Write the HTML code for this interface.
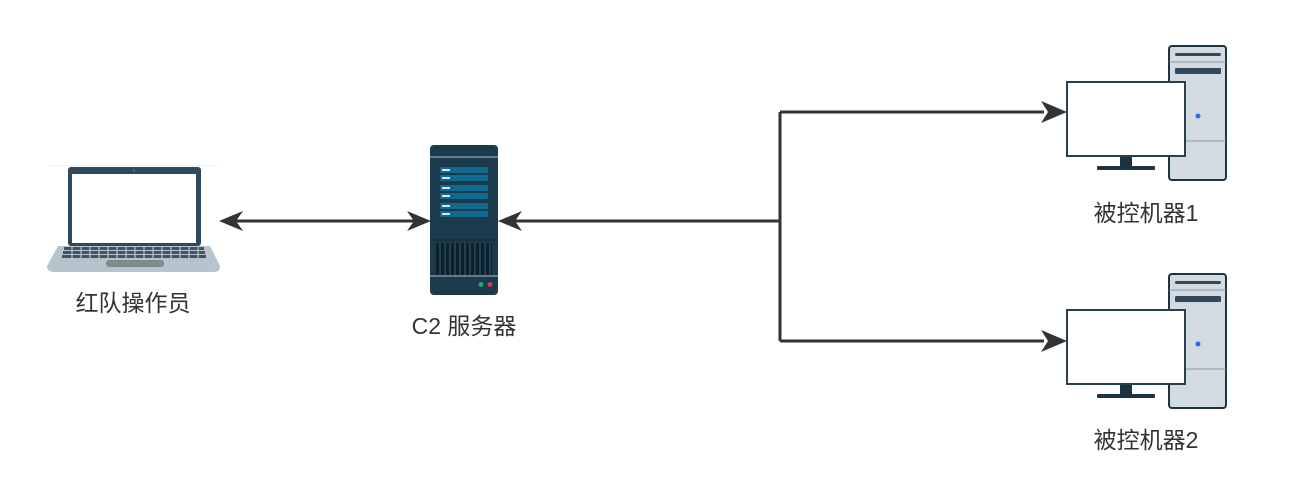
<!DOCTYPE html>
<html><head><meta charset="utf-8"><style>
html,body{margin:0;padding:0;background:#fff;width:1293px;height:486px;overflow:hidden}
svg{display:block}
text{font-family:"Liberation Sans","Noto Sans CJK SC",sans-serif;font-size:23px;fill:#333}
</style></head><body>
<svg width="1293" height="486" viewBox="0 0 1293 486">
<defs>
<marker id="a" markerWidth="10" markerHeight="10" refX="9" refY="5" orient="auto" markerUnits="userSpaceOnUse" viewBox="0 0 10 10"></marker>
</defs>
<g stroke="#333" stroke-width="3" fill="none">
<line x1="236" y1="221" x2="414" y2="221"/>
<polyline points="514,221 780,221"/>
<polyline points="780,112 780,341"/>
<line x1="780" y1="112" x2="1044" y2="112"/>
<line x1="780" y1="341" x2="1044" y2="341"/>
</g>
<g fill="#333">
<polygon points="219,221 243,211 236,221 243,231"/>
<polygon points="431,221 407,211 414,221 407,231"/>
<polygon points="498,221 522,211 515,221 522,231"/>
<polygon points="1067,112 1041,101 1048,112 1041,123"/>
<polygon points="1067,341 1041,330 1048,341 1041,352"/>
</g>
<!-- laptop -->
<line x1="50" y1="166" x2="217" y2="166" stroke="#eee" stroke-width="1"/>
<rect x="68" y="167" width="133" height="79" rx="3" fill="#2f4a5e"/>
<rect x="72" y="174" width="124" height="69" fill="#fff"/>
<circle cx="134" cy="170.5" r="1.2" fill="#667"/>
<path d="M58 246 H210 L220 266 Q220 272 214 272 H54 Q47 272 47 266 Z" fill="#b8c4cb"/>
<g fill="#3d5566">
<rect x="64" y="247" width="140" height="3"/>
<rect x="63" y="251" width="142" height="3"/>
<rect x="62" y="255" width="144" height="3"/>
</g>
<g stroke="#b8c4cb" stroke-width="1.2">
<path d="M72 247v11M81 247v11M90 247v11M99 247v11M108 247v11M117 247v11M126 247v11M135 247v11M144 247v11M153 247v11M162 247v11M171 247v11M180 247v11M189 247v11M198 247v11"/>
</g>
<rect x="106" y="260" width="58" height="7" rx="3" fill="#7f8c8d"/>
<!-- server -->
<rect x="430" y="145" width="68" height="150" rx="4" fill="#1b3a4b"/>
<line x1="430" y1="157" x2="498" y2="157" stroke="#a9c2cf" stroke-width="1"/>
<g fill="#0f6a8f">
<rect x="440" y="167" width="48" height="6"/><rect x="440" y="175" width="48" height="6"/>
<rect x="440" y="185" width="48" height="6"/><rect x="440" y="193" width="48" height="6"/>
<rect x="440" y="203" width="48" height="6"/><rect x="440" y="211" width="48" height="6"/>
</g>
<g fill="#d9e6ee">
<rect x="442" y="169" width="8" height="2"/><rect x="442" y="177" width="8" height="2"/>
<rect x="442" y="187" width="8" height="2"/><rect x="442" y="195" width="8" height="2"/>
<rect x="442" y="205" width="8" height="2"/><rect x="442" y="213" width="8" height="2"/>
</g>
<line x1="430" y1="240" x2="498" y2="240" stroke="#15303d" stroke-width="2"/>
<rect x="436" y="243" width="56" height="32" fill="#0d1f29"/>
<g stroke="#2a4b5c" stroke-width="1.5"><path d="M440 243v32M445 243v32M450 243v32M455 243v32M460 243v32M465 243v32M470 243v32M475 243v32M480 243v32M485 243v32M490 243v32"/></g>
<line x1="430" y1="276" x2="498" y2="276" stroke="#a9c2cf" stroke-width="1"/>
<circle cx="481" cy="284.5" r="2.5" fill="#1aaa6b"/><circle cx="490" cy="284.5" r="2.5" fill="#d13b50"/>
<!-- computers -->
<g id="pc">
<rect x="1169" y="46" width="57" height="134" rx="3" fill="#d4dbe0" stroke="#1e3341" stroke-width="2"/>
<line x1="1169" y1="62" x2="1226" y2="62" stroke="#8899a6" stroke-width="1"/>
<rect x="1175" y="53" width="46" height="3" rx="1.5" fill="#2f4a5e"/>
<rect x="1175" y="68" width="46" height="6" rx="1" fill="#2f4a5e"/>
<line x1="1169" y1="141" x2="1226" y2="141" stroke="#8899a6" stroke-width="1"/>
<circle cx="1198" cy="116" r="2.5" fill="#1b74e4"/>
<rect x="1067" y="82" width="118" height="74" fill="#fff" stroke="#2a3f4e" stroke-width="2"/>
<rect x="1120" y="157" width="12" height="10" fill="#1e3341"/>
<rect x="1097" y="166" width="58" height="4" rx="1" fill="#1e3341"/>
</g>
<use href="#pc" transform="translate(0,228)"/>
<text x="133" y="311" text-anchor="middle">红队操作员</text>
<text x="464" y="334" text-anchor="middle">C2 服务器</text>
<text x="1146" y="221" text-anchor="middle">被控机器1</text>
<text x="1146" y="448" text-anchor="middle">被控机器2</text>
</svg>
</body></html>
